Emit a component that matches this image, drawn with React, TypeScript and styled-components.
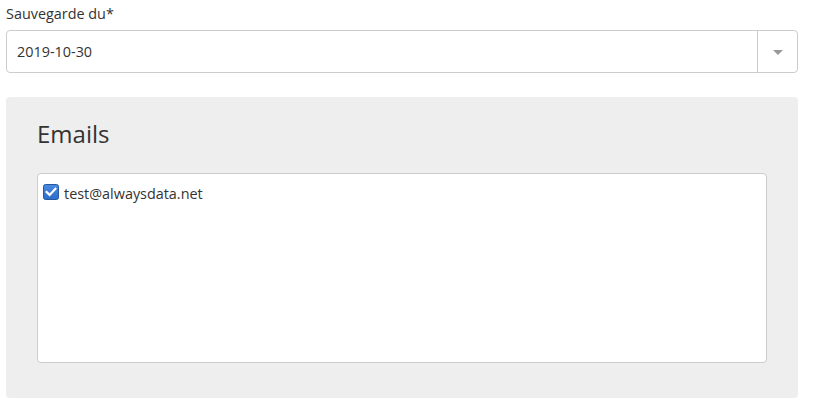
import React from "react";
import styled, { createGlobalStyle } from "styled-components";

const Global = createGlobalStyle`
  html, body { margin: 0; padding: 0; background: #fff; }
  body { font-family: "Open Sans", "Noto Sans", sans-serif; color: #333; }
`;

const Page = styled.div`
  width: 792px;
  padding: 4px 6px 0 6px;
`;

const Label = styled.label`
  display: block;
  font-size: 14.4px;
  line-height: 20px;
  color: #333;
  margin-bottom: 6px;
`;

const Select = styled.div`
  display: flex;
  align-items: stretch;
  height: 41px;
  border: 1px solid #ccc;
  border-radius: 4px;
  background: #fff;
`;

const SelectValue = styled.div`
  flex: 1;
  display: flex;
  align-items: center;
  padding-left: 10px;
  font-size: 14.4px;
  color: #333;
`;

const ArrowZone = styled.div`
  width: 39px;
  border-left: 1px solid #ccc;
  display: flex;
  align-items: center;
  justify-content: center;
`;

const Arrow = styled.span`
  width: 0;
  height: 0;
  border-left: 5px solid transparent;
  border-right: 5px solid transparent;
  border-top: 5px solid #999;
  margin-top: 1px;
`;

const Panel = styled.section`
  margin-top: 24px;
  background: #eee;
  border-radius: 4px;
  padding: 20px 31px 35px 31px;
`;

const Heading = styled.h2`
  margin: 0 0 22px 0;
  font-size: 24px;
  font-weight: 400;
  line-height: 34px;
  color: #333;
`;

const ListBox = styled.div`
  background: #fff;
  border: 1px solid #ccc;
  border-radius: 4px;
  padding: 10px 5px 8px 5px;
  height: 170px;
`;

const Option = styled.label`
  display: flex;
  align-items: flex-start;
  gap: 5px;
  font-size: 14.4px;
  line-height: 20px;
  color: #333;
`;

const CheckWrap = styled.span`
  display: inline-flex;
  margin-top: 0;
`;

const Check = () => (
  <CheckWrap>
    <svg width="16" height="16" viewBox="0 0 16 16">
      <defs>
        <linearGradient id="cb" x1="0" y1="0" x2="0" y2="1">
          <stop offset="0" stopColor="#4a8ae0" />
          <stop offset="1" stopColor="#2e6cc8" />
        </linearGradient>
      </defs>
      <rect x="0.5" y="0.5" width="15" height="15" rx="2" fill="url(#cb)" stroke="#24589f" />
      <path d="M3.6 8 L6.6 10.9 L12.4 4.9" fill="none" stroke="#fff" strokeWidth="2.2" strokeLinecap="square" />
    </svg>
  </CheckWrap>
);

export default function App() {
  return (
    <>
      <Global />
      <Page>
        <Label>Sauvegarde du*</Label>
        <Select>
          <SelectValue>2019-10-30</SelectValue>
          <ArrowZone>
            <Arrow />
          </ArrowZone>
        </Select>
        <Panel>
          <Heading>Emails</Heading>
          <ListBox>
            <Option>
              <Check />
              test@alwaysdata.net
            </Option>
          </ListBox>
        </Panel>
      </Page>
    </>
  );
}
